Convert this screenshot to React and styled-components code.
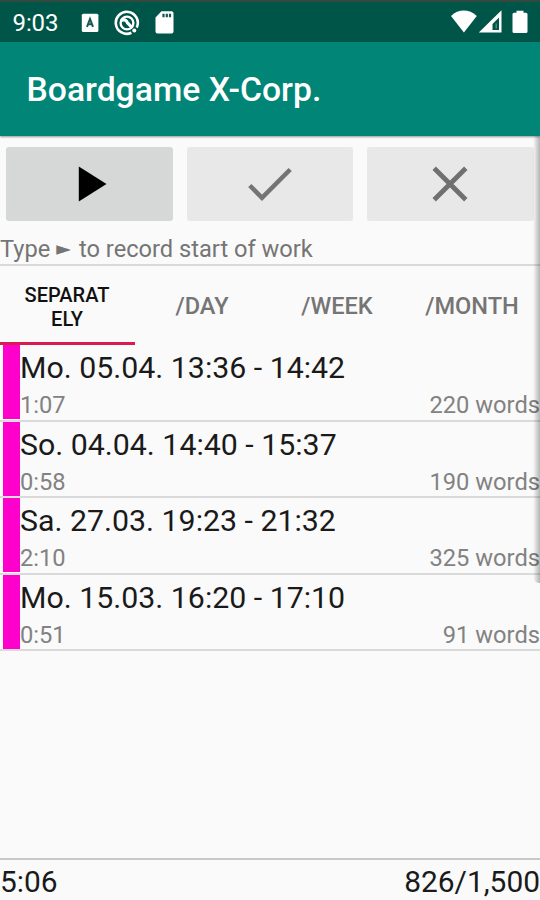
import React, { useState } from 'react'
import styled, { createGlobalStyle } from 'styled-components'

const sessions = [
    { time: 'Mo. 05.04. 13:36 - 14:42', duration: '1:07', words: 220 },
    { time: 'So. 04.04. 14:40 - 15:37', duration: '0:58', words: 190 },
    { time: 'Sa. 27.03. 19:23 - 21:32', duration: '2:10', words: 325 },
    { time: 'Mo. 15.03. 16:20 - 17:10', duration: '0:51', words: 91 },
]

const tabs = ['Separately', '/Day', '/Week', '/Month']

function App() {
    const [active, setActive] = useState('Separately')

    return (
        <Screen>
            <GlobalStyle />
            <StatusBar>
                <Clock>9:03</Clock>
                <Notifications>
                    <svg width='18' height='20' viewBox='0 0 18 20'>
                        <rect x='0.8' y='0.8' width='16.6' height='18.2' rx='1.5' fill='#fff' />
                        <path d='M6 13.800L9 6l3 7.800M7 11.300h4' fill='none' stroke='#17594f' strokeWidth='2' />
                    </svg>
                    <svg width='26' height='26' viewBox='0 0 26 26'>
                        <path d='M17.4 22.8A11 11 0 1 1 22.7 17.6' fill='none' stroke='#fff' strokeWidth='2.6' />
                        <circle cx='13' cy='13' r='6.4' fill='none' stroke='#fff' strokeWidth='2.4' />
                        <path d='M7 10.500c3-1.500 5.500-.5 6.500 2.300l5 5.200' fill='none' stroke='#fff' strokeWidth='3.200' />
                        <circle cx='20.300' cy='20.500' r='2' fill='#fff' />
                    </svg>
                    <svg width='19' height='23' viewBox='0 0 19 23'>
                        <path d='M6.500 .3H16.500a2 2 0 0 1 2 2V20.500a2 2 0 0 1-2 2H2.500a2 2 0 0 1-2-2V6.500z' fill='#fff' />
                        <path d='M8.500 2.700v3.600M11.800 2.700v3.600M15 2.700v3.600' stroke='#17594f' strokeWidth='2.200' />
                    </svg>
                </Notifications>
                <SystemIcons>
                    <svg width='27' height='23' viewBox='0 0 27 23'>
                        <path d='M1 6C8.500-1.200 19-1.200 26.800 6L13.900 22.500z' fill='#fff' />
                    </svg>
                    <svg width='24' height='23' viewBox='0 0 24 23'>
                        <path d='M23.500.200V22.500H.800zM21 7.500V20H14.500V14z' fill='#fff' fillRule='evenodd' />
                        <path d='M18.200 13.500V18.500' stroke='#fff' strokeWidth='1.200' opacity='0.350' />
                    </svg>
                    <svg width='16' height='24' viewBox='0 0 16 24'>
                        <path d='M4.500.700h7v2.100H14a1.500 1.500 0 0 1 1.500 1.500V21.500a1.500 1.500 0 0 1-1.500 1.500H2A1.500 1.500 0 0 1 .5 21.500V4.300A1.500 1.500 0 0 1 2 2.800h2.500z' fill='#fff' />
                    </svg>
                </SystemIcons>
            </StatusBar>
            <Toolbar>
                <Title>Boardgame X-Corp.</Title>
            </Toolbar>
            <Content>
                <Actions>
                    <ActionButton $enabled aria-label='Start'>
                        <svg width='46' height='46' viewBox='0 0 46 46'>
                            <path d='M12.800 5.500L40.500 23 12.800 40.500z' fill='#000' />
                        </svg>
                    </ActionButton>
                    <ActionButton disabled aria-label='Finish'>
                        <svg width='46' height='46' viewBox='0 0 46 46'>
                            <path d='M2.800 24.500L15 36.800 43.200 8.500' fill='none' stroke='#747474' strokeWidth='4.600' />
                        </svg>
                    </ActionButton>
                    <ActionButton disabled aria-label='Cancel'>
                        <svg width='46' height='46' viewBox='0 0 46 46'>
                            <path d='M7.200 7.200l31.600 31.600M38.800 7.200L7.200 38.800' fill='none' stroke='#707070' strokeWidth='4.800' />
                        </svg>
                    </ActionButton>
                </Actions>
                <Hint>Type <Pointer>►</Pointer> to record start of work</Hint>
                <Tabs>
                    {tabs.map((tab) => (
                        <Tab key={tab} $active={tab === active} onClick={() => setActive(tab)}>
                            <span>{tab}</span>
                        </Tab>
                    ))}
                </Tabs>
                <List>
                    {sessions.map((s) => (
                        <Session key={s.time}>
                            <Marker />
                            <Details>
                                <Time>{s.time}</Time>
                                <Meta>
                                    <span>{s.duration}</span>
                                    <span>{s.words} words</span>
                                </Meta>
                            </Details>
                        </Session>
                    ))}
                </List>
                <Totals>
                    <span>5:06</span>
                    <span>826/1,500</span>
                </Totals>
                <EdgeShadow />
            </Content>
        </Screen>
    )
}

const GlobalStyle = createGlobalStyle`
    *{
        box-sizing: border-box;
    }
    body{
        margin: 0;
        background: #fafafa;
    }
    button{
        font-family: inherit;
        border: 0;
        padding: 0;
    }
`

const Screen = styled.div`
    width: 540px;
    height: 900px;
    display: flex;
    flex-direction: column;
    overflow: hidden;
    background: #fafafa;
    color: #1a1a1a;
    font-family: Roboto, 'Noto Sans', sans-serif;
`

const StatusBar = styled.header`
    height: 42px;
    flex: none;
    display: flex;
    align-items: center;
    padding: 1px 12px 0 12.500px;
    border-top: 2px solid #32493f;
    background: #005549;
    color: #fff;
`

const Clock = styled.span`
    width: 68.500px;
    font-size: 24px;
    line-height: 28px;
    letter-spacing: -0.1px;
`

const Notifications = styled.div`
    display: flex;
    align-items: center;
    gap: 15px;

    svg{
        display: block;
    }
`

const SystemIcons = styled.div`
    display: flex;
    align-items: center;
    margin-left: auto;
    margin-top: -2px;

    svg{
        display: block;
    }
    svg + svg{
        margin-left: 1px;
    }
    svg:last-child{
        margin-left: 10px;
    }
`

const Toolbar = styled.div`
    height: 94px;
    flex: none;
    display: flex;
    align-items: center;
    padding: 1px 26.500px 0;
    background: #008577;
    color: #fff;
    box-shadow: 0 1px 2px rgba(0, 0, 0, 0.4);
    z-index: 1;
`

const Title = styled.h1`
    margin: 0;
    font-size: 33.700px;
    font-weight: 500;
    line-height: 40px;
    white-space: nowrap;
`

const Content = styled.main`
    position: relative;
    flex: 1;
    display: flex;
    flex-direction: column;
`

const Actions = styled.div`
    display: grid;
    grid-template-columns: repeat(3, 1fr);
    gap: 14px;
    padding: 11px 6.500px 0 6px;
`

const ActionButton = styled.button`
    height: 74px;
    display: flex;
    align-items: center;
    justify-content: center;
    border-radius: 3px;
    background: ${({ $enabled }) => ($enabled ? '#d6d8d7' : '#e8e8e8')};
`

const Hint = styled.p`
    height: 45px;
    margin: 0;
    padding-top: 14px;
    border-bottom: 2px solid #d9d9d9;
    color: #757575;
    font-size: 23.650px;
    line-height: 28px;
    white-space: nowrap;
`

const Pointer = styled.span`
    display: inline-block;
    width: 17px;
    font-family: 'DejaVu Sans', sans-serif;
    font-size: 19px;
    line-height: 20px;
    vertical-align: 2px;
`

const Tabs = styled.nav`
    height: 79px;
    flex: none;
    display: grid;
    grid-template-columns: repeat(4, 1fr);
`

const Tab = styled.button`
    display: flex;
    align-items: center;
    justify-content: center;
    padding: ${({ $active }) => ($active ? '5px 24px 0 23px' : '4px 1px 0 0')};
    border-bottom: 3px solid ${({ $active }) => ($active ? '#d81b50' : 'transparent')};
    background: none;
    color: ${({ $active }) => ($active ? '#111' : '#757575')};
    font-size: ${({ $active }) => ($active ? 20 : 23.6)}px;
    font-weight: 500;
    line-height: 24px;
    text-transform: uppercase;
    word-break: break-all;
`

const List = styled.ul`
    flex: 1;
    margin: 0;
    padding: 0;
    list-style: none;
`

const Session = styled.li`
    height: 76.500px;
    display: flex;
    padding: 0 0 0.500px 3px;
    border-bottom: 2px solid #dadada;
`

const Marker = styled.div`
    width: 17px;
    flex: none;
    background: #ff00cc;
`

const Details = styled.div`
    flex: 1;
`

const Time = styled.div`
    padding-top: 5px;
    font-size: 30.300px;
    line-height: 36px;
`

const Meta = styled.div`
    display: flex;
    justify-content: space-between;
    padding-top: 5px;
    color: #828282;
    font-size: 23.700px;
    line-height: 28px;
`

const Totals = styled.footer`
    height: 42px;
    display: flex;
    justify-content: space-between;
    padding-top: 4px;
    border-top: 2px solid #c8c8c8;
    font-size: 29.900px;
    line-height: 36px;
`

const EdgeShadow = styled.div`
    position: absolute;
    top: 0;
    right: 0;
    width: 7px;
    height: 447px;
    border-bottom-left-radius: 6px;
    background: linear-gradient(to right, rgba(0, 0, 0, 0), rgba(0, 0, 0, 0.28));
`

export default App
